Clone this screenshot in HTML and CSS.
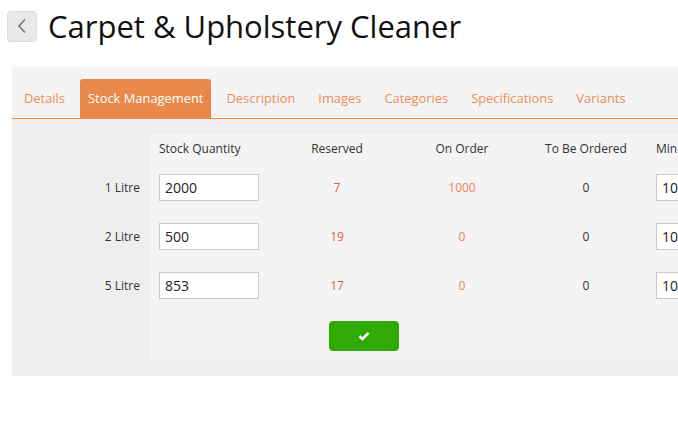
FILE: index.html
```html
<!DOCTYPE html>
<html lang="en">
<head>
    <meta charset="UTF-8">
    <meta name="viewport" content="width=device-width, initial-scale=1.0">
    <title>Carpet &amp; Upholstery Cleaner</title>
    <link rel="stylesheet" href="styles.css">
</head>
<body>

    <div class="baslik">
        <a class="geri" href="#">
            <svg width="12" height="16" viewBox="0 0 12 16"><path d="M9 1.5 L3 8 L9 14.5" fill="none" stroke="#777" stroke-width="1.6"/></svg>
        </a>
        <h1>Carpet &amp; Upholstery Cleaner</h1>
    </div>

    <div class="panel">
        <ul class="sekmeler">
            <li><a href="#">Details</a></li>
            <li class="aktif"><a href="#">Stock Management</a></li>
            <li><a href="#">Description</a></li>
            <li><a href="#">Images</a></li>
            <li><a href="#">Categories</a></li>
            <li><a href="#">Specifications</a></li>
            <li><a href="#">Variants</a></li>
        </ul>

        <div class="icerik">
            <table class="stok">
                <tr class="baslik-satir">
                    <td class="etiket"></td>
                    <th class="sol">Stock Quantity</th>
                    <th>Reserved</th>
                    <th>On Order</th>
                    <th>To Be Ordered</th>
                    <th class="sol">Min</th>
                </tr>
                <tr>
                    <td class="etiket">1 Litre</td>
                    <td class="sol"><input type="text" value="2000"></td>
                    <td class="rezerve">7</td>
                    <td class="siparis">1000</td>
                    <td>0</td>
                    <td class="sol"><input type="text" value="100"></td>
                </tr>
                <tr>
                    <td class="etiket">2 Litre</td>
                    <td class="sol"><input type="text" value="500"></td>
                    <td class="rezerve">19</td>
                    <td class="siparis">0</td>
                    <td>0</td>
                    <td class="sol"><input type="text" value="100"></td>
                </tr>
                <tr>
                    <td class="etiket">5 Litre</td>
                    <td class="sol"><input type="text" value="853"></td>
                    <td class="rezerve">17</td>
                    <td class="siparis">0</td>
                    <td>0</td>
                    <td class="sol"><input type="text" value="100"></td>
                </tr>
                <tr class="buton-satir">
                    <td class="etiket"></td>
                    <td colspan="5" class="sol">
                        <button class="kaydet">
                            <svg width="12" height="10" viewBox="0 0 12 10"><path d="M1.5 5.2 L4.5 8 L10.5 1.8" fill="none" stroke="#fff" stroke-width="2.6"/></svg>
                        </button>
                    </td>
                </tr>
            </table>
        </div>
    </div>

</body>
</html>
```

FILE: styles.css
```css
body {
    font-family: "Open Sans", sans-serif;
    margin: 0;
    color: #333;
    overflow: hidden;
}
.baslik {
    display: flex;
    align-items: center;
    padding: 8px 7px 0;
    height: 36px;
}
.geri {
    display: flex;
    align-items: center;
    justify-content: center;
    width: 28px;
    height: 29px;
    background-color: #e9e9e9;
    border: 1px solid #dcdcdc;
    border-radius: 4px;
    margin-right: 11px;
}
h1 {
    font-size: 31px;
    font-weight: normal;
    color: #111;
    margin: 0;
    line-height: 36px;
}
.panel {
    margin: 23px 0 0 12px;
    width: 820px;
    background-color: #eeeeee;
}
.sekmeler {
    list-style: none;
    margin: 0;
    padding: 12px 0 0 4px;
    display: flex;
    background-color: #f4f4f4;
    border-bottom: 1px solid #ef8a4a;
}
.sekmeler a {
    display: block;
    padding: 0 8px;
    height: 39px;
    line-height: 39px;
    font-size: 12.9px;
    color: #ec8c57;
    text-decoration: none;
    border-radius: 3px 3px 0 0;
    margin-right: 7px;
}
.sekmeler .aktif a {
    background-color: #e8894a;
    color: #fff;
}
.icerik {
    padding: 15px 0 16px 0;
}
.stok {
    border-collapse: collapse;
    font-size: 12px;
}
.stok td, .stok th {
    padding: 0;
    text-align: center;
    font-weight: normal;
    background-color: #f4f4f4;
    height: 49px;
}
.stok .etiket {
    width: 128px;
    padding-right: 10px;
    text-align: right;
    background-color: #eeeeee;
}
.stok .sol {
    text-align: left;
    padding-left: 9px;
}
.stok .baslik-satir th,
.stok .baslik-satir td {
    height: 29px;
}
.stok th:nth-child(2) { width: 116px; }
.stok th:nth-child(3) { width: 124px; }
.stok th:nth-child(4) { width: 126px; }
.stok th:nth-child(5) { width: 122px; }
.stok th:nth-child(6) { width: 140px; }
input[type="text"] {
    width: 100px;
    height: 27px;
    box-sizing: border-box;
    border: 1px solid #c9c9c9;
    padding: 0 5px;
    font-family: "Open Sans", sans-serif;
    font-size: 14px;
    color: #222;
    margin: 0;
    display: block;
}
.rezerve {
    color: #e0623a;
}
.siparis {
    color: #ea8755;
}
.stok .buton-satir td {
    height: 39px;
    vertical-align: top;
}
.stok .buton-satir .sol {
    padding-left: 179px;
    padding-top: 11px;
}
.kaydet {
    width: 70px;
    height: 30px;
    background-color: #31aa03;
    border: none;
    border-radius: 4px;
    cursor: pointer;
    display: flex;
    align-items: center;
    justify-content: center;
}
.kaydet:hover {
    background-color: #2b9502;
}
```
